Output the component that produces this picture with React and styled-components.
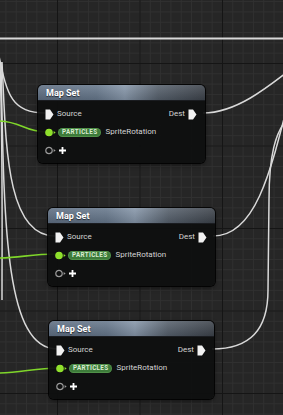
import React from "react";
import styled, { createGlobalStyle } from "styled-components";

const Global = createGlobalStyle`
  html, body { margin: 0; padding: 0; background: #262626; }
  body { font-family: Roboto, "Liberation Sans", sans-serif; }
`;

const Canvas = styled.div`
  position: relative;
  width: 283px;
  height: 415px;
  overflow: hidden;
  background-color: #262626;
  background-image:
    linear-gradient(to right, #151515 1px, transparent 1px),
    linear-gradient(to bottom, #151515 1px, transparent 1px),
    linear-gradient(to right, #303030 1px, transparent 1px),
    linear-gradient(to bottom, #303030 1px, transparent 1px);
  background-size: 82.5px 82.5px, 82.5px 82.5px, 10.3125px 10.3125px,
    10.3125px 10.3125px;
  background-position: 57px 63px, 57px 63px, 57px 63px, 57px 63px;
`;

const Wires = styled.svg`
  position: absolute;
  left: 0;
  top: 0;
  width: 283px;
  height: 415px;
`;

const Node = styled.div`
  position: absolute;
  left: ${(p) => p.$x}px;
  top: ${(p) => p.$y}px;
  width: ${(p) => p.$w}px;
  background: rgba(14, 15, 15, 0.94);
  border-radius: 5px;
  box-shadow: 0 0 0 1px rgba(0, 0, 0, 0.85), 0 2px 5px rgba(0, 0, 0, 0.5);
  overflow: hidden;
`;

const Header = styled.div`
  height: 15px;
  padding: 0 8px;
  display: flex;
  align-items: center;
  font-family: Roboto, "Liberation Sans", sans-serif;
  font-weight: 700;
  font-size: 9px;
  color: #ffffff;
  text-shadow: 0 1px 1px rgba(0, 0, 0, 0.6);
  background:
    linear-gradient(to bottom, rgba(255, 255, 255, 0.12), rgba(0, 0, 0, 0.12)),
    linear-gradient(
      90deg,
      #5f6f83 0%,
      #66778b 35%,
      #8696a9 52%,
      #56606c 72%,
      #3c424a 100%
    );
  border-bottom: 1px solid #1a1c20;
`;

const Body = styled.div`
  padding: 4px 8px 4px 7px;
  display: flex;
  flex-direction: column;
`;

const Row = styled.div`
  height: 18px;
  display: flex;
  align-items: center;
  justify-content: space-between;
`;

const PinGroup = styled.div`
  display: flex;
  align-items: center;
  gap: ${(p) => p.$gap ?? 3}px;
`;

const Label = styled.span`
  font-family: Roboto, "Liberation Sans", sans-serif;
  font-size: 8px;
  color: #d4d4d4;
  line-height: 1;
`;

const Pill = styled.span`
  display: inline-flex;
  align-items: center;
  height: 9px;
  padding: 0 4px;
  border-radius: 5px;
  background: #3d7b3a;
  box-shadow: inset 0 0 0 1px rgba(140, 210, 120, 0.25);
  color: #d9ecd2;
  font-family: Roboto, "Liberation Sans", sans-serif;
  font-weight: 700;
  font-size: 6.3px;
  letter-spacing: 0.35px;
  line-height: 1;
`;

const ExecPin = () => (
  <svg width="9" height="11" viewBox="0 0 9 11">
    <path d="M0.5 0.5 H5 L8.5 5.5 L5 10.5 H0.5 Z" fill="#f2f2f2" />
  </svg>
);

const DataPin = () => (
  <svg width="11" height="9" viewBox="0 0 11 9">
    <circle cx="4" cy="4.5" r="3.8" fill="#8fe02c" />
    <path d="M8.6 3 L10.6 4.5 L8.6 6 Z" fill="#8fe02c" />
  </svg>
);

const EmptyPin = () => (
  <svg width="11" height="9" viewBox="0 0 11 9">
    <circle cx="4" cy="4.5" r="3.2" fill="none" stroke="#9a9a9a" strokeWidth="1.2" />
    <path d="M8.6 3 L10.6 4.5 L8.6 6 Z" fill="#9a9a9a" />
  </svg>
);

const PlusIcon = () => (
  <svg width="7" height="7" viewBox="0 0 7 7">
    <path d="M3.5 0 V7 M0 3.5 H7" stroke="#ffffff" strokeWidth="1.8" />
  </svg>
);

const MapSetNode = ({ x, y, w }) => (
  <Node $x={x} $y={y} $w={w}>
    <Header>Map Set</Header>
    <Body>
      <Row>
        <PinGroup>
          <ExecPin />
          <Label>Source</Label>
        </PinGroup>
        <PinGroup>
          <Label>Dest</Label>
          <ExecPin />
        </PinGroup>
      </Row>
      <Row>
        <PinGroup $gap={2}>
          <DataPin />
          <Pill>PARTICLES</Pill>
          <Label style={{ marginLeft: 2 }}>SpriteRotation</Label>
        </PinGroup>
      </Row>
      <Row>
        <PinGroup $gap={3}>
          <EmptyPin />
          <PlusIcon />
        </PinGroup>
      </Row>
    </Body>
  </Node>
);

const nodes = [
  { x: 38, y: 85, w: 167 },
  { x: 48, y: 208, w: 167 },
  { x: 49, y: 321, w: 165 },
];

const execWires = [
  "M-10 38.5 H300",
  "M-1 56 C 7 95, 12 113, 45 113",
  "M2 62 C 6 140, 5 236, 55 236",
  "M1 62 C 4 220, 4 349, 57 349",
  "M0 64 C 3 150, 2 230, 2 300",
  "M203 113 C 235 113, 265 90, 300 62",
  "M213 236 C 255 236, 270 175, 290 95",
  "M212 349 C 250 349, 268 330, 268 290 L 269 200 C 269 160, 274 128, 292 115",
];

const dataWires = [
  "M-2 121 C 20 121, 25 132, 46 132",
  "M-2 258 C 20 258, 30 254, 56 254",
  "M-2 373 C 20 373, 35 368, 58 368",
];

export default function App() {
  return (
    <>
      <Global />
      <Canvas>
        <Wires viewBox="0 0 283 415">
          {execWires.map((d, i) => (
            <path
              key={i}
              d={d}
              fill="none"
              stroke="#d9d9d9"
              strokeWidth={i === 0 ? 2 : 1.5}
            />
          ))}
          {dataWires.map((d, i) => (
            <path key={i} d={d} fill="none" stroke="#7fd62a" strokeWidth="1.6" />
          ))}
        </Wires>
        {nodes.map((n, i) => (
          <MapSetNode key={i} {...n} />
        ))}
      </Canvas>
    </>
  );
}
